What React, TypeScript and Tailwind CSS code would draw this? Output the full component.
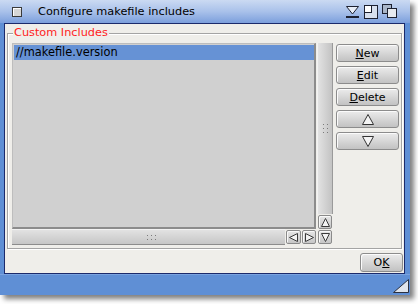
import React from "react";

function Btn({ children, className = "" }: { children: React.ReactNode; className?: string }) {
  return (
    <div
      className={`flex items-center justify-center rounded-[3px] border border-[#8c8c8c] bg-linear-to-b from-[#ececec] to-[#c2c2c2] shadow-[inset_1px_1px_0_#fbfbfb] text-[11px] leading-none text-black ${className}`}
    >
      {children}
    </div>
  );
}

function ArrowBox({ dir, className = "" }: { dir: "up" | "down" | "left" | "right"; className?: string }) {
  const pts: Record<string, string> = {
    up: "1.5,9.5 5.5,1.5 9.5,9.5",
    down: "1.5,1.5 5.5,9.5 9.5,1.5",
    left: "9.5,1.5 1.5,5.5 9.5,9.5",
    right: "1.5,1.5 9.5,5.5 1.5,9.5",
  };
  return (
    <div
      className={`flex items-center justify-center rounded-[2px] border border-[#8a8a8a] bg-linear-to-b from-[#e6e6e6] to-[#c6c6c6] shadow-[inset_1px_1px_0_#f8f8f8] ${className}`}
    >
      <svg width="11" height="11" viewBox="0 0 11 11">
        <polygon points={pts[dir]} fill="#f2f2f2" stroke="#3a3a3a" strokeWidth="1" />
      </svg>
    </div>
  );
}

function Dot() {
  return <span className="block w-[1px] h-[1px] bg-[#7a7a7a]" />;
}

export default function App() {
  return (
    <div className="w-[418px] h-[304px] bg-white font-['DejaVu_Sans',sans-serif] text-[11px] text-black">
      <div className="relative flex flex-col w-[410px] h-[295px] bg-[#5f8fd5] shadow-[4px_4px_5px_rgba(0,0,0,0.5)]">
        {/* Title bar */}
        <div className="h-[23px] shrink-0 flex items-center bg-linear-to-b from-[#cbdaf2] via-[#a9c1ea] to-[#7c9fdc]">
          <div className="ml-[12px] w-[10px] h-[10px] border border-[#3a3a3a] bg-[#d6d6d6] shadow-[inset_1px_1px_0_#ffffff]" />
          <div className="ml-[16px] text-[11.3px] leading-none pt-[1px]">Configure makefile includes</div>
          <div className="ml-auto mr-[12px] flex items-center gap-[4px]">
            <svg width="15" height="14" viewBox="0 0 15 14">
              <path d="M1.5 1.5 H13.5 L7.5 9 Z" fill="#e8eef8" stroke="#1c2030" strokeWidth="1" />
              <rect x="1" y="11" width="13" height="2" fill="#1c2030" />
            </svg>
            <svg width="14" height="14" viewBox="0 0 14 14">
              <rect x="0.5" y="0.5" width="13" height="13" fill="#d8e0ee" stroke="#1c2030" />
              <rect x="0.5" y="0.5" width="7" height="7" fill="#ffffff" stroke="#1c2030" />
            </svg>
            <svg width="16" height="15" viewBox="0 0 16 15">
              <rect x="0.5" y="0.5" width="9" height="9" fill="#aab6c8" stroke="#1c2030" />
              <rect x="5.5" y="4.5" width="9" height="9" fill="#e6eaf0" stroke="#1c2030" />
            </svg>
          </div>
        </div>

        {/* Body */}
        <div className="ml-[4px] mr-[5px] flex-1 flex flex-col border border-[#1b2a6b] bg-[#efeeea]">
          {/* Group frame */}
          <div className="relative mt-[9px] mx-[2px] h-[216px] border border-[#a4a4a4] shadow-[inset_1px_1px_0_#ffffff,1px_1px_0_#ffffff] pt-[9px] pl-[4px] pr-[2px] pb-[2px] flex gap-[3px]">
            <div className="absolute left-[5px] top-[-7px] px-[1px] bg-[#efeeea] text-[#ff2222] text-[11.3px] leading-none">
              Custom Includes
            </div>

            {/* Left column: list + scrollers */}
            <div className="w-[321px] flex flex-col">
              <div className="h-[186px] flex">
                <div className="w-[304px] bg-[#d0d0d0] border-t border-l border-[#bdbdbd] border-r-2 border-b-2 border-r-[#8c8c8c] border-b-[#8c8c8c] pt-[1px] pl-[1px]">
                  <div className="h-[15px] bg-[#6692d5] flex items-center pl-[2px] text-[11.4px] leading-none">
                    //makefile.version
                  </div>
                </div>
                <div className="w-[17px] flex flex-col">
                  <div className="flex-1 ml-[1px] border-l border-[#f2f2f2] border-r border-r-[#9a9a9a] bg-linear-to-r from-[#e2e2e2] to-[#c3c3c3] flex items-center justify-center">
                    <div className="grid grid-cols-2 gap-x-[3px] gap-y-[3px]">
                      <Dot /><Dot /><Dot /><Dot /><Dot /><Dot />
                    </div>
                  </div>
                  <ArrowBox dir="up" className="ml-[2px] w-[14px] h-[14px] mt-[1px]" />
                </div>
              </div>
              <div className="h-[17px] flex">
                <div className="w-[273px] h-[16px] border-t border-[#f2f2f2] border-b border-b-[#8c8c8c] bg-linear-to-b from-[#e2e2e2] to-[#c6c6c6] flex items-center justify-center">
                  <div className="grid grid-cols-3 gap-x-[3px] gap-y-[3px] ml-[6px]">
                    <Dot /><Dot /><Dot /><Dot /><Dot /><Dot />
                  </div>
                </div>
                <ArrowBox dir="left" className="mt-[1px] w-[15px] h-[14px] ml-[1px]" />
                <ArrowBox dir="right" className="mt-[1px] w-[14px] h-[14px] ml-[1px]" />
                <ArrowBox dir="down" className="mt-[1px] w-[14px] h-[14px] ml-[2px]" />
              </div>
            </div>

            {/* Buttons */}
            <div className="w-[63px] mt-[1px] flex flex-col gap-[4px]">
              <Btn className="h-[18px]"><span><span className="underline">N</span>ew</span></Btn>
              <Btn className="h-[18px]"><span><span className="underline">E</span>dit</span></Btn>
              <Btn className="h-[18px]"><span><span className="underline">D</span>elete</span></Btn>
              <Btn className="h-[18px]">
                <svg width="12" height="11" viewBox="0 0 12 11">
                  <polygon points="0.5,10.5 6,0.5 11.5,10.5" fill="#f4f4f4" stroke="#333" strokeWidth="1" />
                </svg>
              </Btn>
              <Btn className="h-[18px]">
                <svg width="12" height="11" viewBox="0 0 12 11">
                  <polygon points="0.5,0.5 6,10.5 11.5,0.5" fill="#f4f4f4" stroke="#333" strokeWidth="1" />
                </svg>
              </Btn>
            </div>
          </div>

          {/* OK row */}
          <div className="flex justify-end mt-[4px] mr-[1px]">
            <Btn className="w-[43px] h-[19px]"><span>O<span className="underline">K</span></span></Btn>
          </div>
        </div>

        {/* Bottom bar */}
        <div className="h-[21px] shrink-0 border-t border-[#7aa3e0]" />

        {/* Resize gadget */}
        <svg className="absolute right-[1px] bottom-[2px]" width="16" height="14" viewBox="0 0 16 14">
          <polygon points="0.5,13.5 15.5,0.5 15.5,13.5" fill="#dfe4ec" stroke="#2a3040" strokeWidth="1" />
        </svg>
      </div>
    </div>
  );
}
